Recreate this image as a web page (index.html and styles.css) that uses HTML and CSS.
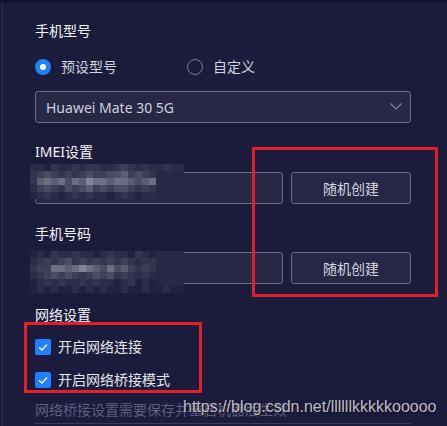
FILE: index.html
```html
<!DOCTYPE html>
<html lang="zh-CN">
<head>
<meta charset="utf-8">
<title>设备设置</title>
<link rel="stylesheet" href="styles.css">
</head>
<body>
<div class="topbar"></div>
<div class="frame">
  <div class="rail"></div>
  <div class="content">
    <div class="label first">手机型号</div>
    <div class="radios">
      <label class="radio"><span class="dot on"></span><span>预设型号</span></label>
      <label class="radio second"><span class="dot"></span><span>自定义</span></label>
    </div>
    <div class="select">
      <span>Huawei Mate 30 5G</span>
      <svg class="chev" width="12" height="7" viewBox="0 0 12 7"><polyline points="0.5,0.5 6,6 11.5,0.5" fill="none" stroke="#85869c" stroke-width="1.2"/></svg>
    </div>

    <div class="label imei">IMEI设置</div>
    <div class="field-row r1">
      <div class="input"></div>
      <button class="btn">随机创建</button>
      <svg class="mosaic m1" width="154" height="35" viewBox="0 0 154 35">
        <g><rect x="0" class="b"/><rect x="7" class="b"/><rect x="14" class="a"/><rect x="21" class="c"/><rect x="28" class="b"/><rect x="35" class="b"/><rect x="42" class="c"/><rect x="49" class="b"/><rect x="56" class="c"/><rect x="63" class="c"/><rect x="70" class="b"/><rect x="77" class="b"/><rect x="84" class="c"/><rect x="91" class="d"/><rect x="98" class="c"/><rect x="105" class="b"/><rect x="112" class="c"/><rect x="119" class="b"/><rect x="126" class="b"/><rect x="133" class="c"/><rect x="140" class="b"/><rect x="147" class="b"/></g>
        <g transform="translate(0,7)"><rect x="0" class="c"/><rect x="7" class="d"/><rect x="14" class="e"/><rect x="21" class="d"/><rect x="28" class="c"/><rect x="35" class="d"/><rect x="42" class="c"/><rect x="49" class="d"/><rect x="56" class="e"/><rect x="63" class="d"/><rect x="70" class="d"/><rect x="77" class="e"/><rect x="84" class="e"/><rect x="91" class="f"/><rect x="98" class="d"/><rect x="105" class="e"/><rect x="112" class="d"/><rect x="119" class="c"/><rect x="126" class="i"/><rect x="133" class="i"/><rect x="140" class="i"/><rect x="147" class="i"/></g>
        <g transform="translate(0,14)"><rect x="0" class="c"/><rect x="7" class="f"/><rect x="14" class="g"/><rect x="21" class="f"/><rect x="28" class="g"/><rect x="35" class="e"/><rect x="42" class="g"/><rect x="49" class="f"/><rect x="56" class="h"/><rect x="63" class="g"/><rect x="70" class="g"/><rect x="77" class="f"/><rect x="84" class="g"/><rect x="91" class="g"/><rect x="98" class="f"/><rect x="105" class="e"/><rect x="112" class="f"/><rect x="119" class="g"/><rect x="126" class="i"/><rect x="133" class="i"/><rect x="140" class="i"/><rect x="147" class="i"/></g>
        <g transform="translate(0,21)"><rect x="0" class="b"/><rect x="7" class="d"/><rect x="14" class="e"/><rect x="21" class="d"/><rect x="28" class="c"/><rect x="35" class="e"/><rect x="42" class="d"/><rect x="49" class="e"/><rect x="56" class="f"/><rect x="63" class="d"/><rect x="70" class="e"/><rect x="77" class="d"/><rect x="84" class="e"/><rect x="91" class="e"/><rect x="98" class="d"/><rect x="105" class="c"/><rect x="112" class="d"/><rect x="119" class="c"/><rect x="126" class="i"/><rect x="133" class="i"/><rect x="140" class="i"/><rect x="147" class="i"/></g>
        <g transform="translate(0,28)"><rect x="0" class="a"/><rect x="7" class="b"/><rect x="14" class="c"/><rect x="21" class="b"/><rect x="28" class="a"/><rect x="35" class="b"/><rect x="42" class="c"/><rect x="49" class="b"/><rect x="56" class="c"/><rect x="63" class="b"/><rect x="70" class="b"/><rect x="77" class="a"/><rect x="84" class="b"/><rect x="91" class="c"/><rect x="98" class="b"/><rect x="105" class="a"/><rect x="112" class="b"/><rect x="119" class="b"/><rect x="126" class="i"/><rect x="133" class="i"/><rect x="140" class="i"/><rect x="147" class="i"/></g>
      </svg>
    </div>

    <div class="label phone">手机号码</div>
    <div class="field-row r2">
      <div class="input"></div>
      <button class="btn">随机创建</button>
      <svg class="mosaic m2" width="154" height="42" viewBox="0 0 154 42">
        <g><rect x="0" class="a"/><rect x="7" class="b"/><rect x="14" class="a"/><rect x="21" class="c"/><rect x="28" class="b"/><rect x="35" class="b"/><rect x="42" class="c"/><rect x="49" class="b"/><rect x="56" class="b"/><rect x="63" class="a"/><rect x="70" class="b"/><rect x="77" class="c"/><rect x="84" class="b"/><rect x="91" class="b"/><rect x="98" class="a"/><rect x="105" class="c"/><rect x="112" class="b"/><rect x="119" class="a"/><rect x="126" class="i"/><rect x="133" class="i"/><rect x="140" class="i"/><rect x="147" class="i"/></g>
        <g transform="translate(0,7)"><rect x="0" class="b"/><rect x="7" class="c"/><rect x="14" class="d"/><rect x="21" class="c"/><rect x="28" class="d"/><rect x="35" class="e"/><rect x="42" class="c"/><rect x="49" class="d"/><rect x="56" class="c"/><rect x="63" class="d"/><rect x="70" class="c"/><rect x="77" class="d"/><rect x="84" class="c"/><rect x="91" class="d"/><rect x="98" class="c"/><rect x="105" class="b"/><rect x="112" class="c"/><rect x="119" class="c"/><rect x="126" class="i"/><rect x="133" class="i"/><rect x="140" class="i"/><rect x="147" class="i"/></g>
        <g transform="translate(0,14)"><rect x="0" class="c"/><rect x="7" class="d"/><rect x="14" class="d"/><rect x="21" class="g"/><rect x="28" class="g"/><rect x="35" class="f"/><rect x="42" class="g"/><rect x="49" class="h"/><rect x="56" class="g"/><rect x="63" class="f"/><rect x="70" class="e"/><rect x="77" class="g"/><rect x="84" class="e"/><rect x="91" class="f"/><rect x="98" class="d"/><rect x="105" class="c"/><rect x="112" class="d"/><rect x="119" class="c"/><rect x="126" class="i"/><rect x="133" class="i"/><rect x="140" class="i"/><rect x="147" class="i"/></g>
        <g transform="translate(0,21)"><rect x="0" class="b"/><rect x="7" class="c"/><rect x="14" class="d"/><rect x="21" class="e"/><rect x="28" class="d"/><rect x="35" class="e"/><rect x="42" class="d"/><rect x="49" class="c"/><rect x="56" class="d"/><rect x="63" class="e"/><rect x="70" class="d"/><rect x="77" class="e"/><rect x="84" class="c"/><rect x="91" class="d"/><rect x="98" class="c"/><rect x="105" class="b"/><rect x="112" class="c"/><rect x="119" class="b"/><rect x="126" class="i"/><rect x="133" class="i"/><rect x="140" class="i"/><rect x="147" class="i"/></g>
        <g transform="translate(0,28)"><rect x="0" class="a"/><rect x="7" class="b"/><rect x="14" class="c"/><rect x="21" class="b"/><rect x="28" class="c"/><rect x="35" class="b"/><rect x="42" class="b"/><rect x="49" class="c"/><rect x="56" class="b"/><rect x="63" class="c"/><rect x="70" class="b"/><rect x="77" class="b"/><rect x="84" class="a"/><rect x="91" class="b"/><rect x="98" class="c"/><rect x="105" class="a"/><rect x="112" class="b"/><rect x="119" class="a"/><rect x="126" class="i"/><rect x="133" class="i"/><rect x="140" class="i"/><rect x="147" class="i"/></g>
        <g transform="translate(0,35)"><rect x="0" class="a"/><rect x="7" class="b"/><rect x="14" class="a"/><rect x="21" class="b"/><rect x="28" class="a"/><rect x="35" class="a"/><rect x="42" class="b"/><rect x="49" class="a"/><rect x="56" class="b"/><rect x="63" class="a"/><rect x="70" class="b"/><rect x="77" class="a"/><rect x="84" class="a"/><rect x="91" class="b"/><rect x="98" class="a"/><rect x="105" class="a"/><rect x="112" class="b"/><rect x="119" class="a"/><rect x="126" class="a"/><rect x="133" class="b"/><rect x="140" class="a"/><rect x="147" class="a"/></g>
      </svg>
    </div>

    <div class="label net">网络设置</div>
    <label class="check c1"><span class="box"><svg width="16" height="16" viewBox="0 0 16 16"><polyline points="4,8.2 7,11 12,5.5" fill="none" stroke="#fff" stroke-width="1.3"/></svg></span><span>开启网络连接</span></label>
    <label class="check c2"><span class="box"><svg width="16" height="16" viewBox="0 0 16 16"><polyline points="4,8.2 7,11 12,5.5" fill="none" stroke="#fff" stroke-width="1.3"/></svg></span><span>开启网络桥接模式</span></label>
    <div class="hint">网络桥接设置需要保存并重启机器后生效</div>
    <div class="next-box"></div>
  </div>
</div>
<div class="mark mark-a"></div>
<div class="mark mark-b"></div>
<div class="watermark">https://blog.csdn.net/llllllkkkkkooooo</div>
</body>
</html>
```

FILE: styles.css
```css
html, body {
  margin: 0;
  padding: 0;
  background: #1b1c3c;
  height: 100%;
  overflow: hidden;
}
body {
  position: relative;
  font-family: "Noto Sans", "Noto Sans CJK SC", sans-serif;
  font-size: 14px;
  color: #d4d4de;
}
.topbar {
  height: 3px;
  background: #121230;
}
.frame {
  display: flex;
  height: 423px;
  overflow: hidden;
}
.rail {
  width: 2px;
  border-right: 1px solid #2c2d4f;
  flex: none;
}
.content {
  flex: 1;
  padding-left: 32px;
  width: 376px;
}
.label {
  line-height: 20px;
  height: 20px;
  color: #f4f4f8;
}
.label.first { margin-top: 18px; }
.label.imei { margin-top: 19px; }
.label.phone { margin-top: 20px; }
.label.net { margin-top: 21px; }

.radios {
  display: flex;
  margin-top: 16px;
  height: 20px;
}
.radio {
  display: flex;
  align-items: center;
  gap: 10px;
  line-height: 20px;
}
.radio.second { margin-left: 70px; }
.dot {
  width: 16px;
  height: 16px;
  box-sizing: border-box;
  border-radius: 50%;
  border: 1px solid #7b7c93;
  flex: none;
}
.dot.on {
  border: 5px solid #1e80ff;
  background: #fff;
}
.select {
  margin-top: 14px;
  width: 376px;
  height: 32px;
  box-sizing: border-box;
  border: 1px solid #6c6d86;
  border-radius: 3px;
  background: #262845;
  display: flex;
  align-items: center;
  justify-content: space-between;
  padding: 0 8px 0 10px;
  color: #d0d0da;
}
.chev { margin-top: -2px; }

.field-row {
  position: relative;
  display: flex;
  gap: 8px;
  margin-top: 10px;
  height: 32px;
}
.field-row.r2 { margin-top: 8px; }
.input {
  width: 248px;
  height: 32px;
  box-sizing: border-box;
  border: 1px solid #6c6d86;
  border-radius: 3px;
  background: #262845;
}
.btn {
  width: 120px;
  height: 32px;
  box-sizing: border-box;
  border: 1px solid #6c6d86;
  border-radius: 3px;
  background: #262845;
  color: #d6d6e0;
  font-family: inherit;
  font-size: 14px;
  padding: 0;
}
.mosaic {
  position: absolute;
  left: -5px;
}
.mosaic.m1 { top: -8px; }
.mosaic.m2 { top: -1px; }
.mosaic rect { width: 7px; height: 7px; }
.mosaic .a { fill: #202242; }
.mosaic .b { fill: #2a2c4b; }
.mosaic .c { fill: #33354f; }
.mosaic .d { fill: #3d3f5a; }
.mosaic .e { fill: #4a4c65; }
.mosaic .f { fill: #5c5d75; }
.mosaic .g { fill: #6d6e85; }
.mosaic .h { fill: #82839a; }
.mosaic .i { fill: #262845; }

.check {
  display: flex;
  align-items: center;
  gap: 7px;
  height: 20px;
  line-height: 20px;
  color: #e6e6ee;
}
.check.c1 { margin-top: 12px; }
.check.c2 { margin-top: 13px; }
.box {
  width: 16px;
  height: 16px;
  border-radius: 2px;
  background: #1e80ff;
  flex: none;
}
.box svg { display: block; }
.hint {
  margin-top: 10px;
  line-height: 20px;
  color: #5d5e7e;
}
.next-box {
  margin-top: 3px;
  width: 376px;
  height: 10px;
  box-sizing: border-box;
  border-top: 1px solid #3a3b5c;
}
.mark {
  position: absolute;
  border: 3px solid #e31e26;
  box-sizing: border-box;
}
.mark-a { left: 252px; top: 147px; width: 186px; height: 150px; }
.mark-b { left: 24px; top: 322px; width: 178px; height: 71px; }
.watermark {
  position: absolute;
  left: 183px;
  top: 397px;
  font-family: "Liberation Sans", Arial, sans-serif;
  font-size: 16px;
  line-height: 20px;
  color: rgba(225, 225, 232, 0.82);
  text-shadow: 1px 1px 1px rgba(0, 0, 0, 0.6);
  white-space: nowrap;
}
```
